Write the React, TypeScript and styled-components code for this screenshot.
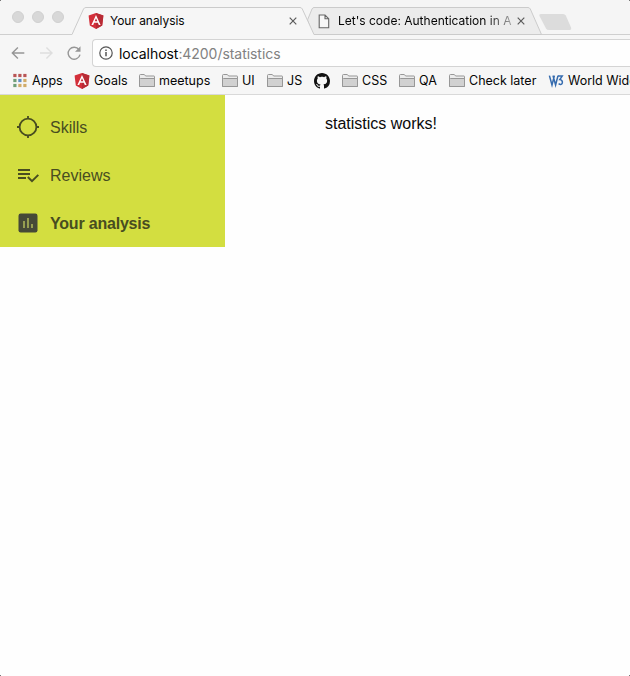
import React from "react";
import styled, { createGlobalStyle } from "styled-components";

const GlobalStyle = createGlobalStyle`
  * { box-sizing: border-box; }
  html, body { margin: 0; padding: 0; background: #fefefe; overflow: hidden; }
  svg { display: block; flex: none; }
`;

const Window = styled.div`
  position: relative;
  width: 630px;
  height: 676px;
  display: flex;
  flex-direction: column;
  overflow: hidden;
  background: #fefefe;
`;

const Corner = styled.span<{ $side: "left" | "right"; $edge: "top" | "bottom" }>`
  position: absolute;
  ${(p) => p.$side}: 0;
  ${(p) => p.$edge}: 0;
  width: 1px;
  height: 1px;
  background: #777;
`;

const Chrome = styled.header`
  font-family: Inter, "Liberation Sans", sans-serif;
  color: #050505;
  background: #f6f6f6;
`;

const TabStrip = styled.div`
  height: 35px;
  display: flex;
  align-items: flex-end;
  background: #f5f5f5;
  box-shadow: inset 0 -1px #cfcfcf;
`;

const Lights = styled.div`
  width: 72px;
  height: 35px;
  padding: 11px 0 0 12px;
  display: flex;
  gap: 8px;
  flex: none;
`;

const Light = styled.span`
  width: 12px;
  height: 12px;
  border: 1px solid #d0d0d0;
  border-radius: 50%;
  background: #d8d8d8;
`;

const Tab = styled.div<{ $width: number; $pad: number; $overlap?: number; $front?: boolean }>`
  position: relative;
  z-index: ${(p) => (p.$front ? 2 : 1)};
  flex: none;
  width: ${(p) => p.$width}px;
  height: 28px;
  margin-left: -${(p) => p.$overlap ?? 0}px;
  padding-left: ${(p) => p.$pad}px;
  display: flex;
  align-items: center;
`;

const TabShape = styled.svg`
  position: absolute;
  inset: 0;
  z-index: -1;
`;

const TabTitle = styled.span<{ $width: number; $gap: number; $fade?: boolean; $spacing: number }>`
  width: ${(p) => p.$width}px;
  margin-left: ${(p) => p.$gap}px;
  font-size: 12px;
  line-height: 18px;
  letter-spacing: ${(p) => p.$spacing}px;
  white-space: nowrap;
  mask-image: ${(p) => (p.$fade ? "linear-gradient(90deg, #000 82%, transparent 104%)" : "none")};
`;

const NewTab = styled.svg`
  margin: 0 0 4px -4px;
`;

const Toolbar = styled.div`
  height: 32px;
  padding-top: 4px;
  display: flex;
`;

const NavButtons = styled.div`
  width: 92px;
  height: 28px;
  padding-left: 10px;
  display: flex;
  gap: 12px;
  align-items: center;
  flex: none;
`;

const AddressBar = styled.div`
  flex: 1;
  height: 28px;
  padding-left: 6px;
  display: flex;
  align-items: center;
  gap: 6px;
  background: #fefefe;
  border: 1px solid #d4d4d4;
  border-right: 0;
  border-radius: 4px 0 0 4px;
  font-size: 14px;
  letter-spacing: -0.05px;
`;

const UrlPath = styled.span`
  color: #818181;
`;

const Bookmarks = styled.nav`
  height: 28px;
  padding-left: 12px;
  display: flex;
  align-items: center;
  border-bottom: 1px solid #d9d9d9;
`;

const Bookmark = styled.div<{ $width: number; $spacing?: number }>`
  flex: none;
  width: ${(p) => p.$width}px;
  display: flex;
  align-items: center;
  gap: 4px;
  font-size: 12.5px;
  line-height: 18px;
  letter-spacing: ${(p) => p.$spacing ?? 0}px;
  white-space: nowrap;
`;

const Page = styled.div`
  display: flex;
  align-items: flex-start;
  font-family: "Liberation Sans", Arial, sans-serif;
  font-size: 16px;
`;

const Sidebar = styled.aside`
  width: 225px;
  padding-top: 8px;
  background: #d3de40;
`;

const MenuItem = styled.div<{ $active?: boolean }>`
  height: 48px;
  padding-left: 16px;
  display: flex;
  align-items: center;
  gap: 10px;
  color: #484d20;
  font-weight: ${(p) => (p.$active ? 700 : 400)};
  letter-spacing: ${(p) => (p.$active ? -0.2 : 0)}px;
`;

const MenuLabel = styled.span`
  padding-top: 2px;
`;

const Content = styled.main`
  padding: 20px 0 0 100px;
  line-height: 18px;
  color: #0a0a0a;
`;

const AngularIcon = () => (
  <svg width="16" height="16" viewBox="0 0 16 16">
    <path d="M8 0 15.4 2.6 14.2 12.4 8 16 1.8 12.4.6 2.6z" fill="#d32f3a" />
    <path d="M8 0 15.4 2.6 14.2 12.4 8 16z" fill="#b82b35" />
    <path d="M8 2 12.6 12H10.8L9.9 9.8H6.1L5.2 12H3.4zM8 5.3 6.7 8.3H9.3z" fill="#fff" fillRule="evenodd" />
  </svg>
);

const CloseIcon = () => (
  <svg width="8" height="8" viewBox="0 0 8 8" stroke="#5b5b5b" strokeWidth="1.2">
    <path d="M.7.7 7.3 7.3M7.3.7.7 7.3" />
  </svg>
);

const PageIcon = () => (
  <svg width="12" height="15" viewBox="0 0 12 15" fill="#f7f7f7" stroke="#666" strokeWidth="1.1">
    <path d="M1.2 1H7L10.7 4.7V13.8H1.2zM7 1V4.7H10.7" />
  </svg>
);

const ArrowIcon = ({ forward = false }: { forward?: boolean }) => (
  <svg width="16" height="16" viewBox="0 0 16 16" fill="none" stroke={forward ? "#dedede" : "#969696"} strokeWidth="1.4">
    <path d={forward ? "M2 8H14M8.4 2.4 14 8 8.4 13.6" : "M14.3 8H2.3M7.9 2.4 2.3 8 7.9 13.6"} />
  </svg>
);

const ReloadIcon = () => (
  <svg width="16" height="16" viewBox="0 0 16 16">
    <path d="M13 4.7A6 6 0 1 0 14 9.6" fill="none" stroke="#969696" strokeWidth="1.4" />
    <path d="M14.5 1.3V6.8H9z" fill="#969696" />
  </svg>
);

const InfoIcon = () => (
  <svg width="14" height="14" viewBox="0 0 14 14" fill="none" stroke="#555" strokeWidth="1.2">
    <circle cx="7" cy="7" r="6.2" />
    <path d="M7 6.1V10.3M7 3.6V5" strokeWidth="1.5" />
  </svg>
);

const appColors = ["#b95555", "#b95555", "#b95555", "#6f9e78", "#5f8dc4", "#d1ab68", "#6f9e78", "#d1ab68", "#d1ab68"];

const AppsIcon = () => (
  <svg width="16" height="16" viewBox="0 0 16 16">
    {appColors.map((color, i) => (
      <rect key={i} x={1.3 + (i % 3) * 5} y={0.9 + Math.floor(i / 3) * 5} width="3.2" height="3.2" fill={color} />
    ))}
  </svg>
);

const FolderIcon = () => (
  <svg width="16" height="16" viewBox="0 0 16 16" stroke="#979797" strokeWidth="1">
    <path d="M.5 13.5V2.5Q.5 1.5 1.5 1.5H5.3L6.6 3H15Q15.5 3 15.5 3.5V13.5z" fill="#ececec" />
    <path d="M.5 13.5V6.2L1.5 5.5H15.5V13.5z" fill="#d1d1d1" />
  </svg>
);

const GithubIcon = () => (
  <svg width="16" height="16" viewBox="0 0 16 16">
    <path
      fill="#111"
      d="M8 0C3.58 0 0 3.58 0 8c0 3.54 2.29 6.53 5.47 7.59.4.07.55-.17.55-.38 0-.19-.01-.82-.01-1.49-2.01.37-2.53-.49-2.69-.94-.09-.23-.48-.94-.82-1.13-.28-.15-.68-.52-.01-.53.63-.01 1.08.58 1.23.82.72 1.21 1.87.87 2.33.66.07-.52.28-.87.51-1.07-1.78-.2-3.64-.89-3.64-3.95 0-.87.31-1.59.82-2.15-.08-.2-.36-1.02.08-2.12 0 0 .67-.21 2.2.82.64-.18 1.32-.27 2-.27s1.36.09 2 .27c1.53-1.04 2.2-.82 2.2-.82.44 1.1.16 1.92.08 2.12.51.56.82 1.27.82 2.15 0 3.07-1.87 3.75-3.65 3.95.29.25.54.73.54 1.48 0 1.07-.01 1.93-.01 2.2 0 .21.15.46.55.38A8.01 8.01 0 0 0 16 8c0-4.42-3.58-8-8-8z"
    />
  </svg>
);

const W3Icon = () => (
  <svg width="16" height="16" viewBox="0 0 16 16" fill="none" stroke="#356bae" strokeWidth="1.5">
    <path d="M1.4 2.6 4 12 6.4 2.6M5 2.6 7.6 12 10 2.6" />
    <path d="M10 3.1H14.2L11.8 6.6C15.8 6.7 15 13.8 10.6 10.7" />
  </svg>
);

const TargetIcon = () => (
  <svg width="24" height="24" viewBox="0 0 24 24" fill="none" stroke="#484d20" strokeWidth="1.8">
    <circle cx="12" cy="12" r="8.4" />
    <path d="M12 1V4M12 20V23M1 12H4M20 12H23" />
  </svg>
);

const ReviewIcon = () => (
  <svg width="24" height="24" viewBox="0 0 24 24" fill="none" stroke="#484d20" strokeWidth="2">
    <path d="M2 7H14M2 11H14M2 15H10" />
    <path d="M11.8 14 16 18.2 22.3 11.9" />
  </svg>
);

const AnalysisIcon = () => (
  <svg width="24" height="24" viewBox="0 0 24 24">
    <rect x="2.5" y="2.5" width="19" height="19" rx="2.2" fill="#464937" />
    <path d="M8 10V17M12 7V17M16 13V17" stroke="#a4ac55" strokeWidth="1.7" />
  </svg>
);

const bookmarks: { icon: React.ReactNode; label: string; width: number; spacing?: number }[] = [
  { icon: <AppsIcon />, label: "Apps", width: 62, spacing: 0.05 },
  { icon: <AngularIcon />, label: "Goals", width: 65 },
  { icon: <FolderIcon />, label: "meetups", width: 83 },
  { icon: <FolderIcon />, label: "UI", width: 45 },
  { icon: <FolderIcon />, label: "JS", width: 47 },
  { icon: <GithubIcon />, label: "", width: 28 },
  { icon: <FolderIcon />, label: "CSS", width: 57 },
  { icon: <FolderIcon />, label: "QA", width: 50 },
  { icon: <FolderIcon />, label: "Check later", width: 99 },
  { icon: <W3Icon />, label: "World Wide", width: 100 },
];

export default function App() {
  return (
    <>
      <GlobalStyle />
      <Window>
        <Chrome>
          <TabStrip>
            <Lights>
              <Light />
              <Light />
              <Light />
            </Lights>
            <Tab $width={243} $pad={16} $front>
              <TabShape width="243" height="28" viewBox="0 0 243 28">
                <path d="M0 27.5 11.5 2Q12.3.5 14 .5H228Q229.5.5 230.3 2L242 27.5V28H0z" fill="#f6f6f6" />
                <path d="M0 27.5 11.5 2Q12.3.5 14 .5H228Q229.5.5 230.3 2L242 27.5" fill="none" stroke="#cbcbcb" />
              </TabShape>
              <AngularIcon />
              <TabTitle $width={179} $gap={6} $spacing={-0.05}>Your analysis</TabTitle>
              <CloseIcon />
            </Tab>
            <Tab $width={236} $pad={12} $overlap={9}>
              <TabShape width="236" height="28" viewBox="0 0 236 28">
                <path
                  d="M1.5 13 6 2Q6.8.5 8 .5H222Q223.5.5 224.3 2L235.5 27.5H7z"
                  fill="#ececec"
                  stroke="#cbcbcb"
                />
              </TabShape>
              <PageIcon />
              <TabTitle $width={179} $gap={8} $spacing={0} $fade>Let's code: Authentication in A</TabTitle>
              <CloseIcon />
            </Tab>
            <NewTab width="35" height="18" viewBox="0 0 35 18">
              <path d="M3 1H25Q27 1 27.8 2.5L33 14.5Q33.8 17 31.5 17H11Q8.8 17 8 15.5L1.5 3Q.8 1 3 1z" fill="#dcdcdc" />
            </NewTab>
          </TabStrip>
          <Toolbar>
            <NavButtons>
              <ArrowIcon />
              <ArrowIcon forward />
              <ReloadIcon />
            </NavButtons>
            <AddressBar>
              <InfoIcon />
              <span>
                localhost<UrlPath>:4200/statistics</UrlPath>
              </span>
            </AddressBar>
          </Toolbar>
          <Bookmarks>
            {bookmarks.map((b, i) => (
              <Bookmark key={i} $width={b.width} $spacing={b.spacing}>
                {b.icon}
                {b.label}
              </Bookmark>
            ))}
          </Bookmarks>
        </Chrome>
        <Page>
          <Sidebar>
            <MenuItem>
              <TargetIcon />
              <MenuLabel>Skills</MenuLabel>
            </MenuItem>
            <MenuItem>
              <ReviewIcon />
              <MenuLabel>Reviews</MenuLabel>
            </MenuItem>
            <MenuItem $active>
              <AnalysisIcon />
              <MenuLabel>Your analysis</MenuLabel>
            </MenuItem>
          </Sidebar>
          <Content>statistics works!</Content>
        </Page>
        <Corner $side="left" $edge="top" />
        <Corner $side="right" $edge="top" />
        <Corner $side="left" $edge="bottom" />
        <Corner $side="right" $edge="bottom" />
      </Window>
    </>
  );
}
